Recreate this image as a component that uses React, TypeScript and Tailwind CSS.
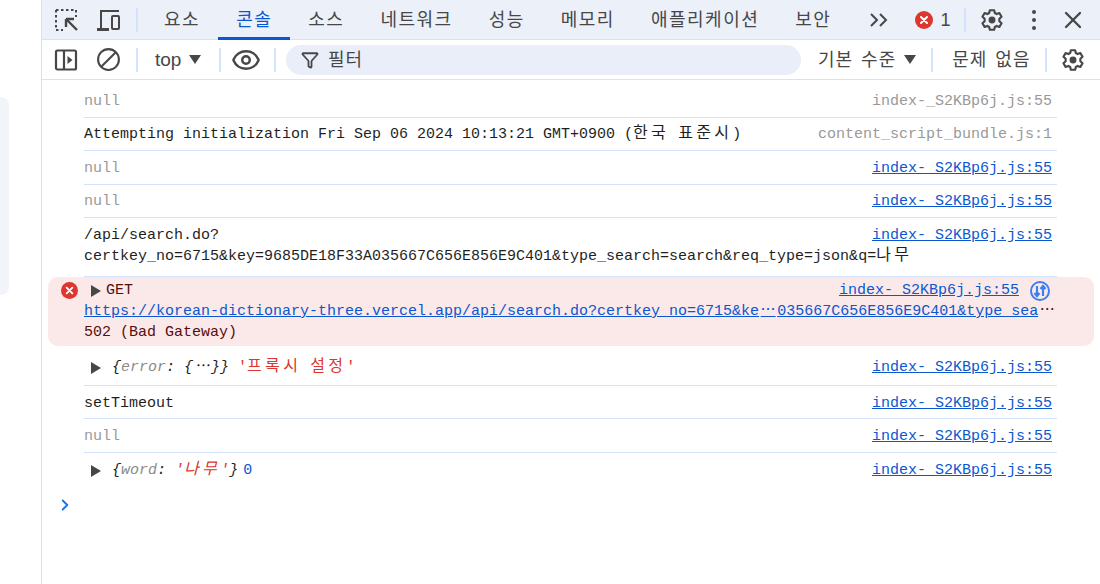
import { ReactNode } from 'react'
import { ChevronRight, Eye, Filter, X } from 'lucide-react'

const SANS = "font-['Liberation_Sans','Noto_Sans_CJK_KR',sans-serif]"
const MONO = "font-['Liberation_Mono','Noto_Sans_CJK_KR',monospace]"

const TABS = ['요소', '콘솔', '소스', '네트워크', '성능', '메모리', '애플리케이션', '보안']

function Gear() {
  return (
    <svg width="26" height="26" viewBox="0 0 24 24" fill="none" stroke="#474747" strokeWidth="2" strokeLinejoin="round">
      <path d="M10 3h4l.6 2.600 1.700.9 2.500-.9 2 3.400-2 1.800v2.400l2 1.800-2 3.400-2.500-.9-1.700.9L14 21h-4l-.6-2.600-1.700-.9-2.500.9-2-3.400 2-1.800v-2.400l-2-1.800 2-3.400 2.500.9 1.700-.9z" />
      <circle cx="12" cy="12" r="2.200" fill="#474747" />
    </svg>
  )
}

function ErrorDot({ size }: { size: number }) {
  return (
    <svg width={size} height={size} viewBox="0 0 18 18">
      <circle cx="9" cy="9" r="9" fill="#dc362e" />
      <path d="M6 6l6 6M12 6l-6 6" stroke="#fff" strokeWidth="2" strokeLinecap="round" />
    </svg>
  )
}

function Divider() {
  return <div className="h-6 w-[2px] bg-[#d3e3fd]" />
}

function Caret() {
  return <div className="h-0 w-0 border-x-[6px] border-t-[9px] border-x-transparent border-t-[#474747]" />
}

function Expand() {
  return <div className="h-0 w-0 shrink-0 border-y-[6px] border-l-[10px] border-y-transparent border-l-[#474747]" />
}

// hangul in the console is two cells wide, the fallback font is narrower than that
function Ko({ children }: { children: ReactNode }) {
  return <span className="text-[16px] leading-[21px] tracking-[3.300px] [word-spacing:-3.900px]">{children}</span>
}

function Dots({ underline }: { underline?: boolean }) {
  return <span className={`inline-block w-[18px] text-center ${underline ? 'underline' : ''}`}>⋯</span>
}

function TabBar() {
  return (
    <div className={`flex h-10 items-center border-b border-[#d3e3fd] bg-[#ebf0f9] ${SANS}`}>
      <div className="flex w-[94px] items-center pl-[11px]">
        <svg width="26" height="26" viewBox="0 0 26 26" fill="none" stroke="#474747" strokeWidth="2">
          <path d="M3 3h20v7M3 3v20h7" strokeDasharray="2.500 2.500" />
          <path d="M13 12l11 11M13 12h8M13 12v8" strokeWidth="2.400" />
        </svg>
        <svg className="ml-[16px]" width="26" height="26" viewBox="0 0 26 26" fill="none" stroke="#474747" strokeWidth="2">
          <path d="M6 22V4h18" />
          <path d="M2 22.500h12" strokeWidth="3" />
          <rect x="17" y="9" width="7" height="13" rx="1" />
        </svg>
      </div>
      <Divider />
      <div className="ml-[8px] flex h-10 text-[#474747]">
        {TABS.map((tab) => (
          <div
            key={tab}
            className={`flex items-center px-[18px] text-[18px] tracking-[1.500px] ${
              tab === '콘솔' ? 'border-b-[3px] border-[#0b57d0] pt-[4px] text-[#0b57d0]' : 'pt-[2px]'
            }`}
          >
            {tab}
          </div>
        ))}
      </div>
      <svg className="ml-[21px]" width="18" height="14" viewBox="0 0 18 14" fill="none" stroke="#474747" strokeWidth="2">
        <path d="M1 1l6 6-6 6M10 1l6 6-6 6" />
      </svg>
      <div className="ml-[27px]">
        <ErrorDot size={18} />
      </div>
      <span className="ml-[7px] w-[10px] pt-[2px] text-[18px] text-[#474747]">1</span>
      <div className="ml-[14px]">
        <Divider />
      </div>
      <div className="ml-[13px]">
        <Gear />
      </div>
      <div className="ml-[27px] flex flex-col gap-[4px]">
        <div className="h-1 w-1 rounded-full bg-[#474747]" />
        <div className="h-1 w-1 rounded-full bg-[#474747]" />
        <div className="h-1 w-1 rounded-full bg-[#474747]" />
      </div>
      <X className="ml-[23px] text-[#474747]" size={28} />
    </div>
  )
}

function FilterBar() {
  return (
    <div className={`flex h-10 items-center border-b border-[#d3e3fd] bg-white text-[#474747] ${SANS}`}>
      <div className="flex w-[94px] items-center pl-[12px]">
        <svg width="24" height="24" viewBox="0 0 24 24" fill="none" stroke="#474747" strokeWidth="2.200">
          <rect x="2" y="2.500" width="20" height="19" rx="1.500" />
          <path d="M10 2.500v19" />
          <path d="M13.500 8l5 4-5 4z" fill="#474747" stroke="none" />
        </svg>
        <svg className="ml-[18px]" width="25" height="25" viewBox="0 0 24 24" fill="none" stroke="#474747" strokeWidth="2">
          <circle cx="12" cy="12" r="10" />
          <path d="M5 19L19 5" />
        </svg>
      </div>
      <Divider />
      <div className="flex w-[81px] items-center gap-[8px] pl-[17px] text-[19px]">
        <span className="pt-[2px]">top</span>
        <Caret />
      </div>
      <Divider />
      <Eye className="ml-[10px]" size={30} />
      <div className="ml-[13px]">
        <Divider />
      </div>
      <div className="ml-[10px] flex h-[30px] w-[515px] items-center gap-[9px] rounded-full bg-[#e9eef8] pl-[15px] text-[18px] tracking-[1px]">
        <Filter size={18} strokeWidth={2.400} />
        <span className="pt-[2px]">필터</span>
      </div>
      <div className="ml-[17px] flex items-center gap-[8px] text-[18px] tracking-[1px] [word-spacing:2px]">
        <span className="pt-[2px]">기본 수준</span>
        <Caret />
      </div>
      <div className="ml-[15px]">
        <Divider />
      </div>
      <span className="ml-[19px] whitespace-nowrap pt-[2px] text-[18px] tracking-[1px] [word-spacing:2px]">문제 없음</span>
      <div className="ml-[14px]">
        <Divider />
      </div>
      <div className="ml-[13px]">
        <Gear />
      </div>
    </div>
  )
}

function Source({ name, plain }: { name: string; plain?: boolean }) {
  return <span className={`shrink-0 ${plain ? 'text-[#999999]' : 'text-[#0b57d0] underline'}`}>{name}</span>
}

function Row({ className, source, plain, children }: { className: string; source: string; plain?: boolean; children: ReactNode }) {
  return (
    <div className={`ml-[42px] mr-[43px] flex justify-between border-b border-[#d3e3fd] pr-[5px] ${className}`}>
      <div className="min-w-0 flex-1 whitespace-nowrap">{children}</div>
      <Source name={source} plain={plain} />
    </div>
  )
}

function ConsoleList() {
  const link = 'index-_S2KBp6j.js:55'
  return (
    <div className={`flex-1 pt-[4px] text-[15px] leading-[21px] text-[#1f1f1f] ${MONO}`}>
      <Row className="h-[34px] pt-[7px]" source={link} plain>
        <span className="text-[#999999]">null</span>
      </Row>
      <Row className="h-[33px] pt-[6px]" source="content_script_bundle.js:1" plain>
        Attempting initialization Fri Sep 06 2024 10:13:21 GMT+0900 (<Ko>한국 표준시</Ko>)
      </Row>
      <Row className="h-[34px] pt-[7px]" source={link}>
        <span className="text-[#999999]">null</span>
      </Row>
      <Row className="h-[33px] pt-[6px]" source={link}>
        <span className="text-[#999999]">null</span>
      </Row>
      <Row className="h-[59px] pt-[7px]" source={link}>
        /api/search.do?
        <br />
        certkey_no=6715&amp;key=9685DE18F33A035667C656E856E9C401&amp;type_search=search&amp;req_type=json&amp;q=<Ko>나무</Ko>
      </Row>

      <div className="mx-[6px] h-[69px] rounded-[10px] bg-[#fbe9e9] pl-[36px] pr-[38px] pt-[3px] text-[#570e0e]">
        <div className="relative flex items-center justify-between">
          <div className="absolute left-[-23px] top-[2px]">
            <ErrorDot size={17} />
          </div>
          <div className="flex items-center gap-[5px] pl-[7px]">
            <Expand />
            <span>GET</span>
          </div>
          <div className="flex items-center gap-[11px]">
            <Source name={link} />
            <svg className="mr-[6px]" width="20" height="20" viewBox="0 0 20 20" fill="none">
              <circle cx="10" cy="10" r="9" stroke="#3d7ff0" strokeWidth="2" />
              <path d="M7 5v10M4.500 12l2.500 3 2.500-3M13 15V5M10.500 8L13 5l2.500 3" stroke="#3d7ff0" strokeWidth="2.200" />
            </svg>
          </div>
        </div>
        <div className="whitespace-nowrap">
          <span className="text-[#0b57d0] underline">
            https://korean-dictionary-three.vercel.app/api/search.do?certkey_no=6715&amp;ke<Dots underline />035667C656E856E9C401&amp;type_sea
          </span>
          <Dots />
        </div>
        <div>502 (Bad Gateway)</div>
      </div>

      <Row className="h-[40px] pt-[11px]" source={link}>
        <div className="flex items-center pl-[7px]">
          <Expand />
          <span className="ml-[11px] whitespace-pre italic">
            {'{'}
            <span className="text-[#8b8b8b]">error</span>: {'{'}
            <Dots />
            {'}}'}
          </span>
          <span className="whitespace-pre text-[#dc362e]">
            {" '"}
            <Ko>프록시 설정</Ko>'
          </span>
        </div>
      </Row>
      <Row className="h-[33px] pt-[7px]" source={link}>
        setTimeout
      </Row>
      <Row className="h-[34px] pt-[7px]" source={link}>
        <span className="text-[#999999]">null</span>
      </Row>
      <div className="ml-[42px] mr-[48px] flex justify-between pt-[7px]">
        <div className="flex items-center pl-[7px]">
          <Expand />
          <span className="ml-[11px] whitespace-pre italic">
            {'{'}
            <span className="text-[#8b8b8b]">word</span>:{' '}
            <span className="text-[#dc362e]">
              '<Ko>나무</Ko>'
            </span>
            {'}'}
          </span>
          <span className="ml-[5px] text-[#0b57d0]">0</span>
        </div>
        <Source name={link} />
      </div>
      <ChevronRight className="ml-[14px] mt-[15px] text-[#1a73e8]" size={18} strokeWidth={2.500} />
    </div>
  )
}

export default function App() {
  return (
    <div className="flex h-[584px] w-[1100px] overflow-hidden bg-white">
      <div className="flex w-[42px] shrink-0 items-start border-r border-[#d3e3fd] pt-[97px]">
        <div className="h-[198px] w-[9px] rounded-r-[8px] bg-[#f1f4f9]" />
      </div>
      <div className="flex min-w-0 flex-1 flex-col">
        <TabBar />
        <FilterBar />
        <ConsoleList />
      </div>
    </div>
  )
}
